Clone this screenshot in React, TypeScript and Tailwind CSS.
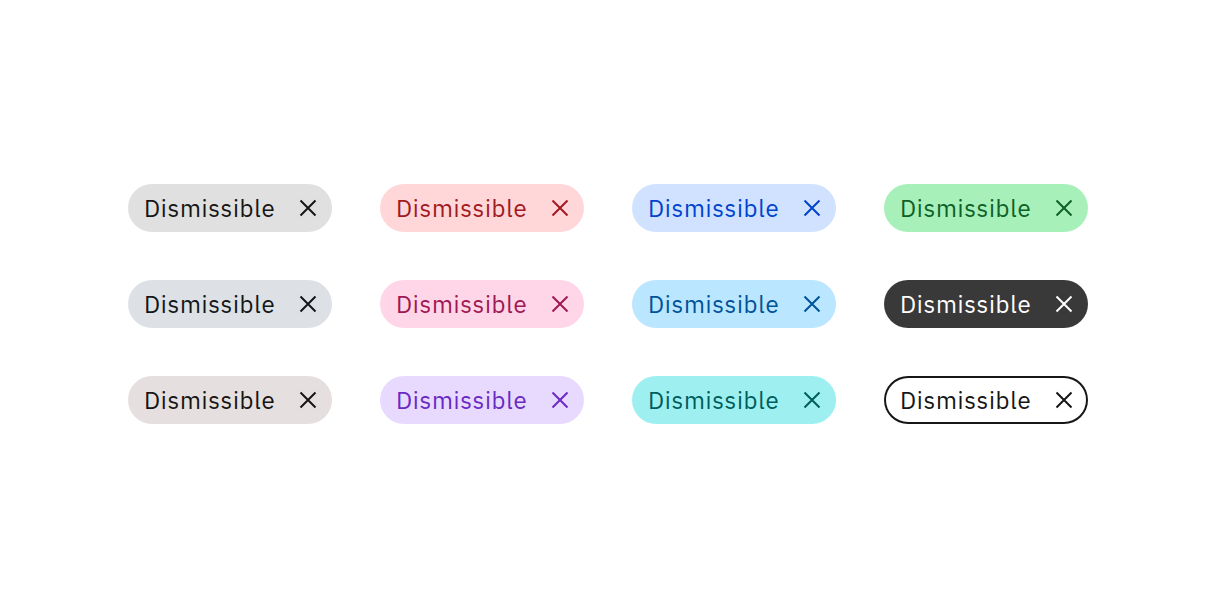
import React from 'react';

type TagStyle = { bg: string; text: string };

const tags: TagStyle[] = [
  { bg: 'bg-[#e0e0e0]', text: 'text-[#161616]' },
  { bg: 'bg-[#ffd7d9]', text: 'text-[#a2191f]' },
  { bg: 'bg-[#d0e2ff]', text: 'text-[#0043ce]' },
  { bg: 'bg-[#a7f0ba]', text: 'text-[#0e6027]' },
  { bg: 'bg-[#dde1e6]', text: 'text-[#121619]' },
  { bg: 'bg-[#ffd6e8]', text: 'text-[#9f1853]' },
  { bg: 'bg-[#bae6ff]', text: 'text-[#00539a]' },
  { bg: 'bg-[#393939]', text: 'text-[#ffffff]' },
  { bg: 'bg-[#e5e0df]', text: 'text-[#171414]' },
  { bg: 'bg-[#e8daff]', text: 'text-[#6929c4]' },
  { bg: 'bg-[#9ef0f0]', text: 'text-[#005d5d]' },
  { bg: 'bg-white ring-2 ring-inset ring-[#161616]', text: 'text-[#161616]' },
];

const CloseIcon = () => (
  <svg width="24" height="24" viewBox="0 0 24 24" fill="none" stroke="currentColor" strokeWidth="2">
    <path d="M4.5 4.5L19.5 19.5M19.5 4.5L4.5 19.5" />
  </svg>
);

const Tag: React.FC<{ style: TagStyle }> = ({ style }) => (
  <div
    className={`flex items-center justify-between w-[204px] h-[48px] rounded-full pl-[16px] pr-[12px] ${style.bg} ${style.text}`}
  >
    <span className="text-[24px] leading-[30px] tracking-[0.7px] -mt-[1px]">Dismissible</span>
    <button className="flex items-center justify-center w-[24px] h-[24px] -mt-[1px]">
      <CloseIcon />
    </button>
  </div>
);

export default function App() {
  return (
    <div
      className="w-[1216px] h-[608px] bg-white flex items-center justify-center"
      style={{ fontFamily: '"IBM Plex Sans", Inter, "Noto Sans", sans-serif' }}
    >
      <div className="grid grid-cols-4 gap-x-[48px] gap-y-[48px]">
        {tags.map((t, i) => (
          <Tag key={i} style={t} />
        ))}
      </div>
    </div>
  );
}
